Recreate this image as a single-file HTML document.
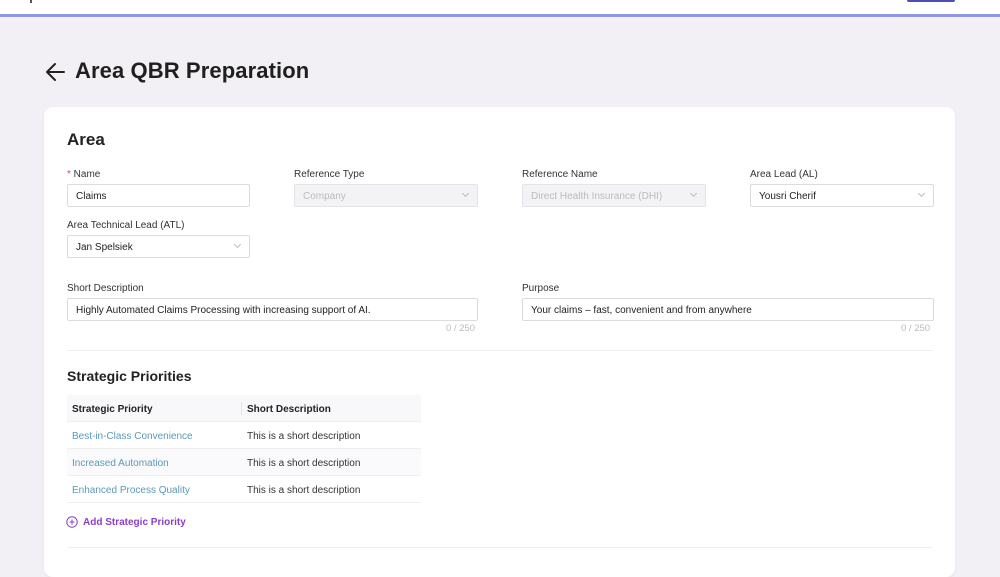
<!DOCTYPE html>
<html><head><style>
*{margin:0;padding:0;box-sizing:border-box}
body{width:1000px;height:563px;overflow:hidden;background:#f2f0f4;font-family:"Liberation Sans",sans-serif;position:relative;color:#222}
.a{position:absolute}
.lbl{position:absolute;font-size:10px;color:#333}
.in{position:absolute;height:23px;border:1px solid #dcdce0;background:#fff;border-radius:2px;font-size:10px;color:#222;padding:0 8px;line-height:23px}
.dis{background:#f3f3f5;color:#bbb;border-color:#e4e4e8}
.chev{position:absolute;right:9px;top:6px;width:5px;height:5px;border-right:1px solid #bbb;border-bottom:1px solid #bbb;transform:rotate(45deg)}
.cnt{position:absolute;font-size:9.5px;color:#bbb}
.row{position:absolute;left:67px;width:354px;height:27px;font-size:10px;line-height:29px;border-bottom:1px solid #eee}
.row span{position:absolute}
</style></head><body>
<div class="a" style="left:0;top:0;width:1000px;height:14px;background:#fff"></div>
<div class="a" style="left:0;top:14px;width:1000px;height:3px;background:#8f97e2"></div>
<div class="a" style="left:30px;top:0;width:2px;height:3px;background:#555"></div>
<div class="a" style="left:907px;top:0;width:48px;height:2px;background:#4a4fb0;border-radius:0 0 2px 2px"></div>
<svg class="a" style="left:44px;top:60px" width="24" height="24" viewBox="0 0 24 24"><path d="M20 12H4M11 4l-8 8 8 8" fill="none" stroke="#222" stroke-width="2" stroke-linecap="round" stroke-linejoin="round"/></svg>
<div class="a" style="left:75px;top:58px;font-size:22px;font-weight:bold;color:#1f1f1f;letter-spacing:0.1px">Area QBR Preparation</div>
<div class="a" style="left:44px;top:107px;width:911px;height:470px;background:#fff;border-radius:9px;box-shadow:0 1px 3px rgba(0,0,0,.05)"></div>
<div class="a" style="left:67px;top:130px;font-size:17px;font-weight:bold;color:#222">Area</div>
<div class="lbl" style="left:67px;top:169px"><span style="color:#e44">*</span> Name</div>
<div class="lbl" style="left:294px;top:169px">Reference Type</div>
<div class="lbl" style="left:522px;top:169px">Reference Name</div>
<div class="lbl" style="left:750px;top:169px">Area Lead (AL)</div>
<div class="in" style="left:67px;top:184px;width:183px">Claims</div>
<div class="in dis" style="left:294px;top:184px;width:184px">Company<i class="chev"></i></div>
<div class="in dis" style="left:522px;top:184px;width:184px">Direct Health Insurance (DHI)<i class="chev"></i></div>
<div class="in" style="left:750px;top:184px;width:184px">Yousri Cherif<i class="chev"></i></div>
<div class="lbl" style="left:67px;top:220px">Area Technical Lead (ATL)</div>
<div class="in" style="left:67px;top:235px;width:183px">Jan Spelsiek<i class="chev"></i></div>
<div class="lbl" style="left:67px;top:283px">Short Description</div>
<div class="lbl" style="left:522px;top:283px">Purpose</div>
<div class="in" style="left:67px;top:298px;width:411px">Highly Automated Claims Processing with increasing support of AI.</div>
<div class="in" style="left:522px;top:298px;width:412px">Your claims – fast, convenient and from anywhere</div>
<div class="cnt" style="left:446px;top:323px">0 / 250</div>
<div class="cnt" style="left:901px;top:323px">0 / 250</div>
<div class="a" style="left:67px;top:350px;width:866px;height:1px;background:#eee"></div>
<div class="a" style="left:67px;top:368px;font-size:14px;font-weight:bold;color:#222">Strategic Priorities</div>
<div class="row" style="top:395px;background:#f8f7fa;font-weight:bold;color:#222"><span style="left:5px">Strategic Priority</span><span style="left:180px">Short Description</span><i class="a" style="left:174px;top:7px;width:1px;height:13px;background:#e4e4e8"></i></div>
<div class="row" style="top:422px"><span style="left:5px;color:#5a9ab8">Best-in-Class Convenience</span><span style="left:180px;color:#333">This is a short description</span></div>
<div class="row" style="top:449px;background:#faf9fb"><span style="left:5px;color:#5a9ab8">Increased Automation</span><span style="left:180px;color:#333">This is a short description</span></div>
<div class="row" style="top:476px"><span style="left:5px;color:#5a9ab8">Enhanced Process Quality</span><span style="left:180px;color:#333">This is a short description</span></div>
<svg class="a" style="left:66px;top:516px" width="12" height="12" viewBox="0 0 12 12"><circle cx="6" cy="6" r="5.2" fill="none" stroke="#8a3fc7" stroke-width="1"/><path d="M6 3.5v5M3.5 6h5" stroke="#8a3fc7" stroke-width="1"/></svg>
<div class="a" style="left:83px;top:517px;font-size:10px;font-weight:bold;color:#8a3fc7">Add Strategic Priority</div>
<div class="a" style="left:67px;top:547px;width:866px;height:1px;background:#eee"></div>
</body></html>
